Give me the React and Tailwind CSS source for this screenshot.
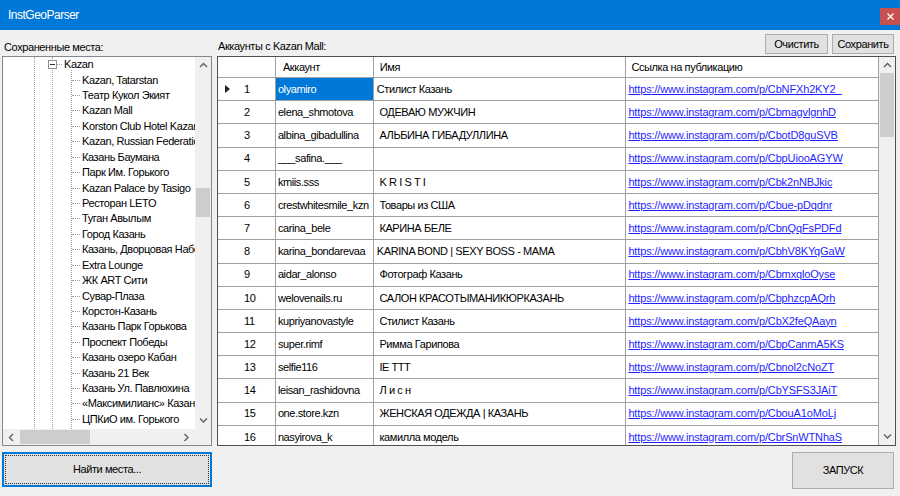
import React from 'react';

const places = [
  'Kazan, Tatarstan',
  'Театр Кукол Экият',
  'Kazan Mall',
  'Korston Club Hotel Kazan',
  'Kazan, Russian Federation',
  'Казань Баумана',
  'Парк Им. Горького',
  'Kazan Palace by Tasigo',
  'Ресторан LETO',
  'Туган Авылым',
  'Город Казань',
  'Казань, Дворцовая Набережная',
  'Extra Lounge',
  'ЖК ART Сити',
  'Сувар-Плаза',
  'Корстон-Казань',
  'Казань Парк Горькова',
  'Проспект Победы',
  'Казань озеро Кабан',
  'Казань 21 Век',
  'Казань Ул. Павлюхина',
  '«Максимилианс» Казань',
  'ЦПКиО им. Горького',
];

const rows = [
  ['olyamiro', 'Стилист Казань', 'CbNFXh2KY2_'],
  ['elena_shmotova', ' ОДЕВАЮ МУЖЧИН', 'CbmagvlgnhD'],
  ['albina_gibadullina', ' АЛЬБИНА ГИБАДУЛЛИНА', 'CbotD8guSVB'],
  ['___safina.___', '', 'CbpUiooAGYW'],
  ['kmiis.sss', ' K R I S T I', 'Cbk2nNBJkic'],
  ['crestwhitesmile_kzn', ' Товары из США', 'Cbue-pDqdnr'],
  ['carina_bele', ' КАРИНА БЕЛЕ', 'CbnQqFsPDFd'],
  ['karina_bondarevaa', 'KARINA BOND | SEXY BOSS - MAMA', 'CbhV8KYqGaW'],
  ['aidar_alonso', ' Фотограф Казань', 'CbmxqloOyse'],
  ['welovenails.ru', ' САЛОН КРАСОТЫМАНИКЮРКАЗАНЬ', 'CbphzcpAQrh'],
  ['kupriyanovastyle', ' Стилист Казань', 'CbX2feQAayn'],
  ['super.rimf', ' Римма Гарипова', 'CbpCanmA5KS'],
  ['selfie116', ' IE TTT', 'Cbnol2cNoZT'],
  ['leisan_rashidovna', ' Л и с н', 'CbYSFS3JAiT'],
  ['one.store.kzn', ' ЖЕНСКАЯ ОДЕЖДА | КАЗАНЬ', 'CbouA1oMoLj'],
  ['nasyirova_k', ' камилла модель', 'CbrSnWTNhaS'],
];

const Chevron = ({ dir }) => {
  const d = {
    up: 'M1 5 L4.5 1.5 L8 5',
    down: 'M1 1.5 L4.5 5 L8 1.5',
    left: 'M5 1 L1.5 4.5 L5 8',
    right: 'M1.5 1 L5 4.5 L1.5 8',
  }[dir];
  const vertical = dir === 'up' || dir === 'down';
  return (
    <svg width={vertical ? 9 : 7} height={vertical ? 7 : 9} viewBox={vertical ? '0 0 9 7' : '0 0 7 9'}>
      <path d={d} fill="none" stroke="#606060" strokeWidth="1.4" />
    </svg>
  );
};

const Tree = () => (
  <div className="h-[390px] border border-[#828790] bg-white flex flex-col">
    <div className="flex flex-1 min-h-0">
      <div className="relative flex-1 overflow-hidden">
        <div className="absolute left-[31px] top-0 bottom-0 border-l border-dotted border-[#a0a0a0]" />
        <div className="absolute left-[49px] top-0 bottom-0 border-l border-dotted border-[#a0a0a0]" />
        <div className="absolute left-[68px] top-[13px] bottom-0 border-l border-dotted border-[#a0a0a0]" />
        <div className="relative flex flex-col">
          <div className="h-[15.43px] flex items-center">
            <div className="w-[45px]" />
            <div className="w-[9px] h-[9px] border border-[#919191] bg-white flex items-center justify-center">
              <div className="w-[5px] h-px bg-[#333]" />
            </div>
            <div className="w-[5px] border-t border-dotted border-[#a0a0a0]" />
            <span className="ml-[2px] whitespace-nowrap leading-[13px]">Kazan</span>
          </div>
          {places.map((p) => (
            <div key={p} className="h-[15.43px] flex items-center">
              <div className="w-[69px] shrink-0" />
              <div className="w-[8px] shrink-0 border-t border-dotted border-[#a0a0a0]" />
              <span className="ml-[2px] whitespace-nowrap leading-[13px]">{p}</span>
            </div>
          ))}
        </div>
      </div>
      <div className="w-[16px] bg-[#f0f0f0] flex flex-col">
        <div className="h-[17px] flex items-center justify-center"><Chevron dir="up" /></div>
        <div className="flex-1 flex flex-col pt-[114px]">
          <div className="h-[29px] mx-px bg-[#cdcdcd]" />
        </div>
        <div className="h-[17px] flex items-center justify-center"><Chevron dir="down" /></div>
      </div>
    </div>
    <div className="h-[16px] flex bg-[#f0f0f0]">
      <div className="w-[17px] flex items-center justify-center"><Chevron dir="left" /></div>
      <div className="flex-1 flex items-center">
        <div className="w-[70px] h-[14px] bg-[#cdcdcd]" />
      </div>
      <div className="w-[17px] flex items-center justify-center"><Chevron dir="right" /></div>
      <div className="w-[16px] bg-[#f0f0f0]" />
    </div>
  </div>
);

const Grid = () => (
  <div className="h-[390px] border border-[#505050] bg-white flex">
    <div className="flex-1 overflow-hidden">
      <div className="h-[21px] flex border-b border-[#a0a0a0]">
        <div className="w-[58px] border-r border-[#a0a0a0]" />
        <div className="w-[98px] border-r border-[#a0a0a0] pl-[7px] flex items-center">Аккаунт</div>
        <div className="w-[253px] border-r border-[#a0a0a0] pl-[6px] flex items-center">Имя</div>
        <div className="w-[253px] border-r border-[#a0a0a0] pl-[5px] flex items-center">Ссылка на публикацию</div>
      </div>
      {rows.map(([acc, name, code], i) => (
        <div key={acc} className="h-[23.2px] flex border-b border-[#a0a0a0]">
          <div className="w-[58px] border-r border-[#a0a0a0] flex items-center">
            <div className="w-[26px] flex justify-start pl-[7px]">
              {i === 0 && (
                <svg width="5" height="8" viewBox="0 0 5 8">
                  <path d="M0 0 L5 4 L0 8 Z" fill="#222" />
                </svg>
              )}
            </div>
            <span>{i + 1}</span>
          </div>
          <div
            className={
              'w-[98px] border-r border-[#a0a0a0] pl-[2px] flex items-center whitespace-nowrap overflow-hidden ' +
              (i === 0 ? 'bg-[#0078d7] text-white' : '')
            }
          >
            {acc}
          </div>
          <div className="w-[253px] border-r border-[#a0a0a0] pl-[3px] flex items-center whitespace-pre overflow-hidden">
            {name}
          </div>
          <div className="w-[253px] border-r border-[#a0a0a0] pl-[2px] flex items-center whitespace-nowrap overflow-hidden">
            <span className="text-[#1f1fff] underline tracking-[-0.15px]">https://www.instagram.com/p/{code}</span>
          </div>
        </div>
      ))}
    </div>
    <div className="w-[16px] bg-[#f0f0f0] flex flex-col">
      <div className="h-[16px] flex items-center justify-center"><Chevron dir="up" /></div>
      <div className="flex-1 flex flex-col">
        <div className="h-[64px] mx-px bg-[#cdcdcd]" />
      </div>
      <div className="h-[17px] flex items-center justify-center"><Chevron dir="down" /></div>
    </div>
  </div>
);

export default function App() {
  return (
    <div className="w-[900px] h-[496px] bg-[#f0f0f0] overflow-hidden font-['Liberation_Sans',Arial,sans-serif] text-[11px] tracking-[-0.4px] text-black">
      <div className="h-[30px] bg-[#0078d7] flex items-start justify-between">
        <span className="ml-[8px] mt-[7px] text-white text-[12px] leading-[16px] tracking-[-0.5px]">InstGeoParser</span>
        <div className="mt-[8px] w-[20px] h-[17px] bg-[#c75050] flex items-center justify-center">
          <svg width="7" height="7" viewBox="0 0 7 7">
            <path d="M0.5 0.5 L6.5 6.5 M6.5 0.5 L0.5 6.5" stroke="#fff" strokeWidth="1.3" />
          </svg>
        </div>
      </div>
      <div className="flex px-[2px] pt-[4px]">
        <div className="w-[210px] flex flex-col">
          <div className="h-[22px] pt-[7px] pl-[2px] leading-[13px]">Сохраненные места:</div>
          <Tree />
          <button className="mt-[6px] h-[35px] border-2 border-[#0078d7] bg-[#e1e1e1] p-[1px]">
            <div className="h-full border border-dotted border-[#333] flex items-center justify-center">
              Найти места...
            </div>
          </button>
        </div>
        <div className="ml-[5px] w-[679px] flex flex-col">
          <div className="h-[22px] flex justify-between">
            <span className="pt-[6px] pl-px leading-[13px]">Аккаунты с Kazan Mall:</span>
            <div className="flex gap-[4px] mr-[2px]">
              <button className="w-[63px] h-[20px] border border-[#adadad] bg-[#e1e1e1]">Очистить</button>
              <button className="w-[62px] h-[20px] border border-[#adadad] bg-[#e1e1e1]">Сохранить</button>
            </div>
          </div>
          <Grid />
          <div className="mt-[6px] flex justify-end">
            <button className="w-[102px] h-[37px] mr-[2px] border border-[#adadad] bg-[#e1e1e1]">ЗАПУСК</button>
          </div>
        </div>
      </div>
    </div>
  );
}
